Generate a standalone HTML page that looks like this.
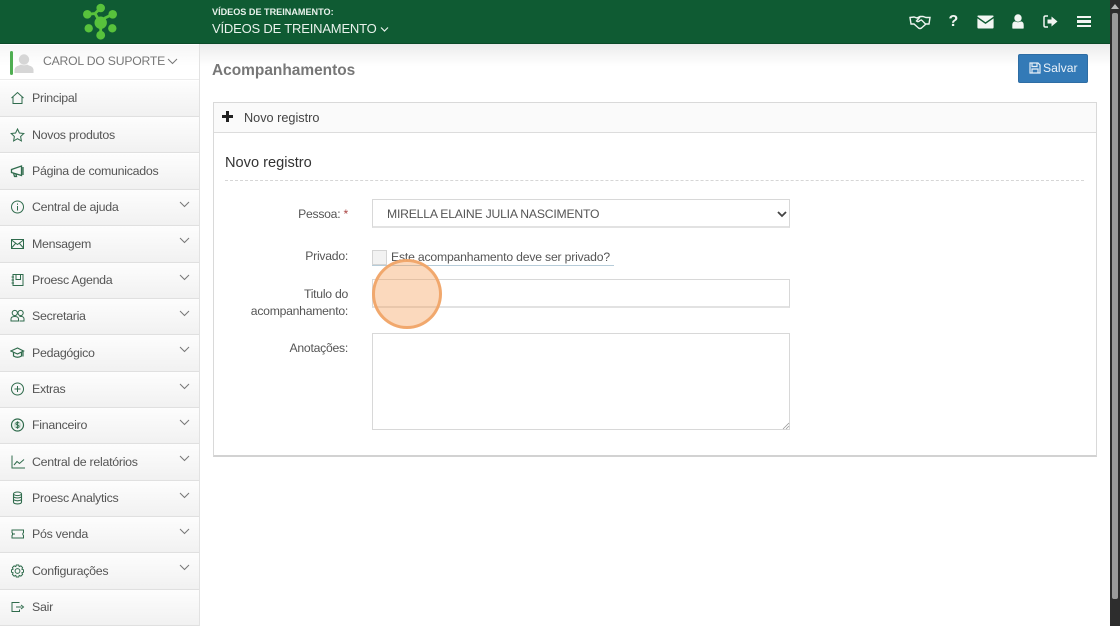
<!DOCTYPE html>
<html lang="pt">
<head>
<meta charset="utf-8">
<title>Acompanhamentos</title>
<style>
*{box-sizing:border-box}
html,body{margin:0;padding:0;width:1120px;height:626px;overflow:hidden;background:#fff;font-family:"Liberation Sans",sans-serif;color:#555}
#wrap{position:absolute;left:0;top:0;width:1120px;height:626px;overflow:hidden;background:#fff;filter:blur(.3px)}
.a{position:absolute}
#hdr{left:0;top:0;width:1110px;height:44px;background:#0f5b33;border-bottom:1px solid #0b4a29}
#shadow{left:200px;top:44px;width:910px;height:22px;background:linear-gradient(#ececec,#fff)}
#side{left:0;top:44px;width:200px;height:582px;background:#fff;border-right:1px solid #e2e2e2}
.row{position:absolute;left:0;width:199px;height:36.35px;background:linear-gradient(#fdfdfd,#f1f1f1);border-bottom:1px solid #e0e0e0;font-size:12.4px;letter-spacing:-.28px;color:#555}
.row span{position:absolute;left:32px;top:50%;margin-top:0;transform:translateY(-50%);white-space:nowrap}
.row svg.i{position:absolute;left:10px;top:50%;margin-top:-7px;width:15px;height:14px;fill:none;stroke:#2f6b4c;stroke-width:1}
.row svg.c{position:absolute;left:179px;top:11px;width:11px;height:7px;fill:none;stroke:#777;stroke-width:1}
.lbl{position:absolute;font-size:12.2px;letter-spacing:-.25px;color:#555;text-align:right;white-space:nowrap;line-height:17px}
.box{position:absolute;background:#fff;border:1px solid #d8d8d8;border-bottom:2px solid #e2e2e2}
</style>
</head>
<body>
<div id="wrap">
<div class="a" id="hdr"></div>
<svg class="a" style="left:80px;top:0" width="42" height="42" viewBox="80 0 42 42" fill="#58c23c">
<path d="M87.3 14.3 L95 13.5 L100.7 8 M112.7 14.3 L105 18 L100.7 24 L100.7 35.7 M95 13.5 L100 22" stroke="#58c23c" stroke-width="2.8" fill="none"/>
<circle cx="100.7" cy="8" r="4.3"/><circle cx="87.3" cy="14.3" r="4.3"/><circle cx="112.7" cy="14.3" r="4.3"/><circle cx="88.7" cy="28.3" r="4.2"/><circle cx="112.3" cy="28.3" r="4.2"/><circle cx="100.7" cy="35.2" r="4.4"/><circle cx="100.7" cy="22.7" r="6.2"/>
</svg>
<div class="a" style="left:212px;top:6px;font-size:9.1px;font-weight:bold;color:#e9f2ec;white-space:nowrap;line-height:12px">VÍDEOS DE TREINAMENTO:</div>
<div class="a" style="left:212px;top:21px;font-size:13px;letter-spacing:-.19px;color:#e9f2ec;white-space:nowrap;line-height:16px">VÍDEOS DE TREINAMENTO</div>
<svg class="a" style="left:380px;top:26px" width="9" height="7" viewBox="0 0 9 7" fill="none" stroke="#e9f2ec" stroke-width="1.2"><path d="M1 1.5 L4.5 5 L8 1.5"/></svg>

<!-- header icons -->
<svg class="a" style="left:909px;top:14px" width="22" height="16" viewBox="0 0 22 16" fill="none" stroke="#eef4f0" stroke-width="1.4"><path d="M1 3.5 L5 3 L8 4 L11 2.5 L14 2.5 L17 3.5 L21 3.5 L20 10 L17 10 L12.5 14 Q11 15 9.5 14 L5 10 L2 10 Z"/><path d="M11 3 L7.5 7 Q9 8.5 11 6.5 L12.5 6 L16.5 10"/></svg>
<div class="a" style="left:948.5px;top:12.5px;font-size:16px;font-weight:bold;color:#f2f6f3;line-height:18px">?</div>
<svg class="a" style="left:977px;top:15px" width="17" height="14" viewBox="0 0 17 14"><path d="M1.2 0.5 H15.8 Q16.6 0.5 16.6 1.6 L8.5 7.2 L0.4 1.6 Q0.4 0.5 1.2 0.5Z" fill="#f2f6f3"/><path d="M0.4 3.4 L8.5 9 L16.6 3.4 V12.4 Q16.6 13.5 15.6 13.5 H1.4 Q0.4 13.5 0.4 12.4Z" fill="#f2f6f3"/></svg>
<svg class="a" style="left:1012px;top:14px" width="12" height="15" viewBox="0 0 12 15" fill="#f2f6f3"><circle cx="6" cy="4" r="3.7"/><path d="M0.3 14 V11 Q0.3 7.8 3 7.4 Q6 9.2 9 7.4 Q11.7 7.8 11.7 11 V14 Q11.7 14.6 11 14.6 H1 Q0.3 14.6 0.3 14Z"/></svg>
<svg class="a" style="left:1043px;top:15px" width="15" height="13" viewBox="0 0 15 13"><path d="M5 1 H2.5 Q1 1 1 2.5 V10.5 Q1 12 2.5 12 H5" fill="none" stroke="#f2f6f3" stroke-width="1.5"/><path d="M4.5 4.5 H8.5 V1.5 L14.5 6.5 L8.5 11.5 V8.5 H4.5Z" fill="#f2f6f3"/></svg>
<div class="a" style="left:1077px;top:16px;width:14px;height:2.3px;background:#f2f6f3"></div>
<div class="a" style="left:1077px;top:20.4px;width:14px;height:2.3px;background:#f2f6f3"></div>
<div class="a" style="left:1077px;top:24.8px;width:14px;height:2.3px;background:#f2f6f3"></div>

<!-- Sidebar -->
<div class="a" id="side"></div>
<div class="a" style="left:0;top:45px;width:199px;height:35px;background:linear-gradient(#f6f6f6,#fff 60%);border-bottom:1px solid #ececec"></div>
<div class="a" style="left:10px;top:51px;width:3px;height:24px;background:#4fae52;border-radius:2px"></div>
<svg class="a" style="left:14px;top:53px" width="20" height="21" viewBox="0 0 20 21" fill="#d6d6d6"><circle cx="10" cy="6.5" r="5.2"/><path d="M0.5 20 V16.5 Q1 13.5 5 12.5 L7 11.5 Q10 13 13 11.5 L15 12.5 Q19 13.5 19.5 16.5 V20Z"/></svg>
<div class="a" style="left:43px;top:53px;font-size:12.2px;letter-spacing:-.2px;color:#777;white-space:nowrap;line-height:16px">CAROL DO SUPORTE</div>
<svg class="a" style="left:167px;top:58px" width="11" height="7" viewBox="0 0 11 7" fill="none" stroke="#777" stroke-width="1"><path d="M1 1 L5.5 5.5 L10 1"/></svg>

<div class="row" style="top:80.8px"><svg class="i" viewBox="0 0 15 14"><path d="M1.5 7 L7.5 1.5 L13.5 7 M3 6 V12.5 H12 V6"/></svg><span>Principal</span></div>
<div class="row" style="top:117.1px"><svg class="i" viewBox="0 0 15 14"><path d="M7.5 1 L9.4 5 L13.8 5.5 L10.6 8.5 L11.4 12.9 L7.5 10.7 L3.6 12.9 L4.4 8.5 L1.2 5.5 L5.6 5Z"/></svg><span>Novos produtos</span></div>
<div class="row" style="top:153.5px"><svg class="i" viewBox="0 0 15 14"><path d="M1.5 5.5 L11.5 2 V11.5 L1.5 8.5Z M3.5 9 L4.5 12.5 H6.5 L5.8 9.7 M13 3 V11" stroke-width="1.3"/></svg><span>Página de comunicados</span></div>
<div class="row" style="top:189.8px"><svg class="i" viewBox="0 0 15 14"><circle cx="7.5" cy="7" r="6"/><path d="M7.5 6 V10.5 M7.5 3.5 V4.8"/></svg><span>Central de ajuda</span><svg class="c" viewBox="0 0 11 7"><path d="M1 1 L5.5 5.5 L10 1"/></svg></div>
<div class="row" style="top:226.2px"><svg class="i" viewBox="0 0 15 14"><rect x="1.5" y="2.5" width="12" height="9"/><path d="M1.5 3 L7.5 7.5 L13.5 3 M1.5 11 L5.5 6.5 M13.5 11 L9.5 6.5"/></svg><span>Mensagem</span><svg class="c" viewBox="0 0 11 7"><path d="M1 1 L5.5 5.5 L10 1"/></svg></div>
<div class="row" style="top:262.5px"><svg class="i" viewBox="0 0 15 14"><path d="M3 1.5 H13 V12.5 H3 Z M6 1.5 V6.5 H10.5 V1.5 M1.5 4 H4 M1.5 7 H4 M1.5 10 H4"/></svg><span>Proesc Agenda</span><svg class="c" viewBox="0 0 11 7"><path d="M1 1 L5.5 5.5 L10 1"/></svg></div>
<div class="row" style="top:298.8px"><svg class="i" viewBox="0 0 15 14"><circle cx="4.8" cy="4" r="2.6"/><circle cx="10.6" cy="4" r="2.6"/><path d="M1 12 V10 Q1 7.5 4.8 7.5 Q8.5 7.5 8.5 10 V12Z M9.5 7.5 Q14 7 14 10 V12 H9.5"/></svg><span>Secretaria</span><svg class="c" viewBox="0 0 11 7"><path d="M1 1 L5.5 5.5 L10 1"/></svg></div>
<div class="row" style="top:335.2px"><svg class="i" viewBox="0 0 15 14"><path d="M0.8 5 L7.5 2 L13.5 5 L7.5 8Z M3.5 6.5 V10 Q7.5 12.5 11.5 10 V6.5 M13 5 V10.5" stroke-width="1.2"/></svg><span>Pedagógico</span><svg class="c" viewBox="0 0 11 7"><path d="M1 1 L5.5 5.5 L10 1"/></svg></div>
<div class="row" style="top:371.5px"><svg class="i" viewBox="0 0 15 14"><circle cx="7.5" cy="7" r="6"/><path d="M7.5 4 V10 M4.5 7 H10.5"/></svg><span>Extras</span><svg class="c" viewBox="0 0 11 7"><path d="M1 1 L5.5 5.5 L10 1"/></svg></div>
<div class="row" style="top:407.8px"><svg class="i" viewBox="0 0 15 14"><circle cx="7.5" cy="7" r="6" stroke-width="1.2"/><circle cx="7.5" cy="7" r="3.9" fill="#cfe0d6" stroke="none"/><path d="M9.2 5 Q7.5 3.8 6 5 Q5.5 6.4 7.5 7 Q9.5 7.6 9 9 Q7.5 10.2 5.8 9 M7.5 3.3 V10.7" stroke-width=".9"/></svg><span>Financeiro</span><svg class="c" viewBox="0 0 11 7"><path d="M1 1 L5.5 5.5 L10 1"/></svg></div>
<div class="row" style="top:444.2px"><svg class="i" viewBox="0 0 15 14" style="left:11px"><path d="M1 0.5 V13 H14 M3 10 L6 6.5 L8.5 8.5 L13 4.5"/></svg><span>Central de relatórios</span><svg class="c" viewBox="0 0 11 7"><path d="M1 1 L5.5 5.5 L10 1"/></svg></div>
<div class="row" style="top:480.5px"><svg class="i" viewBox="0 0 15 14"><ellipse cx="7.5" cy="2.8" rx="4" ry="1.8"/><path d="M3.5 2.8 V11 Q3.5 12.9 7.5 12.9 Q11.5 12.9 11.5 11 V2.8 M3.5 6 Q7.5 8 11.5 6 M3.5 8.8 Q7.5 10.8 11.5 8.8" stroke-width="1.1"/></svg><span>Proesc Analytics</span><svg class="c" viewBox="0 0 11 7"><path d="M1 1 L5.5 5.5 L10 1"/></svg></div>
<div class="row" style="top:516.8px"><svg class="i" viewBox="0 0 15 14"><path d="M2 3 H13.5 V5.5 Q12 7 13.5 8.5 V11 H2 V8.5 Q3.5 7 2 5.5Z M5 7 H2"/></svg><span>Pós venda</span><svg class="c" viewBox="0 0 11 7"><path d="M1 1 L5.5 5.5 L10 1"/></svg></div>
<div class="row" style="top:553.2px"><svg class="i" viewBox="0 0 15 14"><circle cx="7.5" cy="7" r="2.4"/><path d="M6.3 1 H8.7 L9.2 2.6 L10.9 1.9 L12.6 3.6 L11.9 5.2 L13.5 5.8 V8.2 L11.9 8.8 L12.6 10.4 L10.9 12.1 L9.2 11.4 L8.7 13 H6.3 L5.8 11.4 L4.1 12.1 L2.4 10.4 L3.1 8.8 L1.5 8.2 V5.8 L3.1 5.2 L2.4 3.6 L4.1 1.9 L5.8 2.6Z"/></svg><span>Configurações</span><svg class="c" viewBox="0 0 11 7"><path d="M1 1 L5.5 5.5 L10 1"/></svg></div>
<div class="row" style="top:589.5px"><svg class="i" viewBox="0 0 15 14"><path d="M9.5 2.5 H2 V11.5 H9.5 V9.5 M6 7 H11.5 M11 5 L13.5 7 L11 9"/></svg><span>Sair</span></div>

<!-- Main -->
<div class="a" id="shadow"></div>
<div class="a" style="left:212px;top:61px;font-size:15.45px;font-weight:bold;color:#777;white-space:nowrap;line-height:19px">Acompanhamentos</div>
<div class="a" style="left:1018px;top:54px;width:70px;height:29px;background:#337ab7;border:1px solid #2e6da4;border-radius:2px"></div>
<svg class="a" style="left:1029px;top:62px" width="12" height="12" viewBox="0 0 12 12" fill="none" stroke="#e6eff7" stroke-width="1.2"><path d="M1 1 H9 L11 3 V11 H1Z M3 1 V4.5 H8 V1 M3 11 V7 H9 V11"/></svg>
<div class="a" style="left:1043px;top:60.5px;font-size:12.2px;color:#eaf2f9;white-space:nowrap;line-height:15px">Salvar</div>

<div class="a" style="left:213px;top:102px;width:884px;height:355px;background:#fff;border:1px solid #d9d9d9;border-bottom:2px solid #d2d2d2"></div>
<div class="a" style="left:214px;top:103px;width:882px;height:30px;background:#fafafa;border-bottom:1px solid #dcdcdc"></div>
<svg class="a" style="left:222px;top:111px" width="11" height="11" viewBox="0 0 11 11" fill="#222"><path d="M4 0 H7 V4 H11 V7 H7 V11 H4 V7 H0 V4 H4Z"/></svg>
<div class="a" style="left:244px;top:109.5px;font-size:12.7px;color:#444;white-space:nowrap;line-height:17px">Novo registro</div>
<div class="a" style="left:225px;top:153.5px;font-size:14.6px;color:#333;white-space:nowrap;line-height:18px">Novo registro</div>
<div class="a" style="left:225px;top:180px;width:859px;height:0;border-top:1px dashed #d6d6d6"></div>

<div class="lbl" style="left:240px;width:108px;top:205.5px">Pessoa: <span style="color:#a94442">*</span></div>
<div class="box" style="left:372px;top:199px;width:418px;height:29px"></div>
<div class="a" style="left:387px;top:206.5px;font-size:12.2px;letter-spacing:-.2px;color:#555;white-space:nowrap;line-height:15px">MIRELLA ELAINE JULIA NASCIMENTO</div>
<svg class="a" style="left:777px;top:211px" width="10" height="7" viewBox="0 0 10 7" fill="none" stroke="#444" stroke-width="1.8"><path d="M1 1 L5 5 L9 1"/></svg>

<div class="lbl" style="left:240px;width:108px;top:248px">Privado:</div>
<div class="a" style="left:372px;top:250px;width:15px;height:15px;background:#f2f2f2;border:1px solid #d4d4d4"></div>
<div class="a" style="left:391px;top:249.5px;font-size:12.2px;letter-spacing:-.18px;color:#555;white-space:nowrap;line-height:15px">Este acompanhamento deve ser privado?</div>
<div class="a" style="left:372px;top:264.5px;width:242px;height:1px;background:#b6ccd9"></div>

<div class="lbl" style="left:220px;width:128px;top:285.5px">Titulo do<br>acompanhamento:</div>
<div class="box" style="left:372px;top:279px;width:418px;height:29px"></div>

<div class="lbl" style="left:240px;width:108px;top:339.5px">Anotações:</div>
<div class="box" style="left:372px;top:333px;width:418px;height:97px;border-bottom-width:1px;border-bottom-color:#d8d8d8"></div>
<svg class="a" style="left:782px;top:422px" width="8" height="8" viewBox="0 0 8 8" stroke="#999" stroke-width=".8" fill="none"><path d="M1 7 L7 1 M4 7 L7 4"/></svg>

<!-- Highlight -->
<div class="a" style="left:372px;top:259px;width:70px;height:70px;border-radius:50%;background:rgba(245,160,90,.4);border:3px solid rgba(240,165,105,.95)"></div>

<!-- Scrollbar -->
<div class="a" style="left:1109.5px;top:0;width:10.5px;height:626px;background:#2d2d2d"></div>
<div class="a" style="left:1112px;top:13px;width:6px;height:586px;background:#9a9a9a;border-radius:2px"></div>
<svg class="a" style="left:1111px;top:4px" width="8" height="5" viewBox="0 0 8 5" fill="#bbb"><path d="M4 0 L8 5 H0Z"/></svg>
</div>
</body>
</html>
